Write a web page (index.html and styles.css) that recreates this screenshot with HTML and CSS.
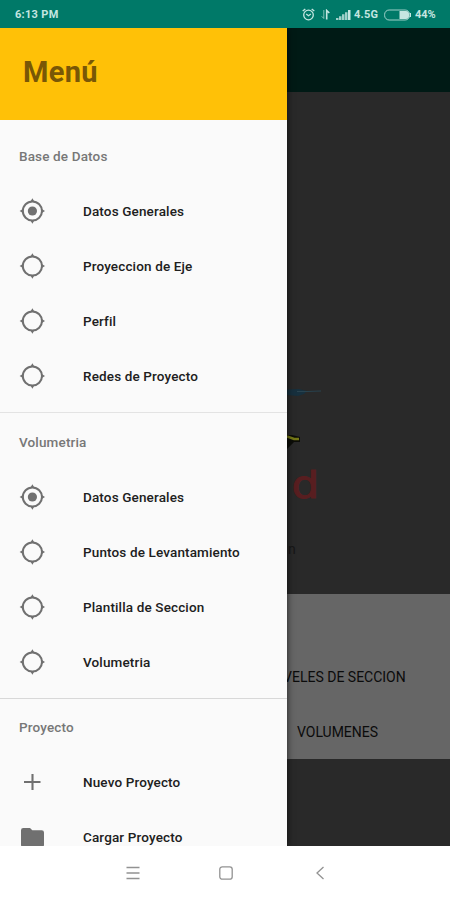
FILE: index.html
```html
<!DOCTYPE html>
<html lang="es">
<head>
<meta charset="utf-8">
<title>Menú</title>
<link rel="stylesheet" href="styles.css">
</head>
<body>
<svg width="0" height="0" class="defs">
  <symbol id="target" viewBox="0 0 26 26"><circle cx="13.400" cy="13" r="9.6" fill="none" stroke="currentColor" stroke-width="2"/><path d="M13.400 .2 15.600 4h-4.400zM13.400 25.800 11.200 22h4.400zM.6 13 4.400 10.800v4.400zM26 13 22.400 15.200v-4.400z" fill="currentColor"/></symbol>
  <symbol id="fixed" viewBox="0 0 26 26"><use href="#target"/><circle cx="13.400" cy="13" r="4.6" fill="currentColor"/></symbol>
  <symbol id="plus" viewBox="0 0 26 26"><path d="M13.500 5v16M5 13h16.500" stroke="currentColor" stroke-width="2.1"/></symbol>
  <symbol id="folder" viewBox="0 0 26 26"><path d="M4.300 4H11l2.3 2.2h9.400a2.3 2.3 0 0 1 2.3 2.3v12.2a2.3 2.3 0 0 1-2.3 2.3H4.300a2.3 2.3 0 0 1-2.3-2.3V6.300a2.300 2.300 0 0 1 2.300-2.300z" fill="currentColor"/></symbol>
</svg>
<div class="phone">
  <header class="status">
    <span class="time">6:13 PM</span>
    <svg class="alarm" width="13" height="13" viewBox="0 0 13 13" fill="none" stroke="currentColor" stroke-width="1.3"><circle cx="6.500" cy="7" r="4.800"/><path d="M.7 3 3.300.9M12.300 3 9.700.9M4.200 6l2.300 1.700L8.900 6"/></svg>
    <svg class="data" width="9" height="11" viewBox="0 0 9 11" fill="none" stroke="currentColor"><path d="M2.800 1v8.500L.7 7.300" stroke-width="1" opacity=".65"/><path d="M5.700 10.500V1.500L8.300 4" stroke-width="1.600"/></svg>
    <svg class="signal" width="15" height="11" viewBox="0 0 15 11" fill="currentColor"><path d="M0 9h2.500v2H0zM3 7.300h2.500V11H3zM6 5.200h2.500V11H6zM9 3.200h2.500V11H9z" opacity=".8"/><path d="M12 1h2.500v10H12z"/></svg>
    <span class="network">4.5G</span>
    <svg class="battery" width="28" height="12" viewBox="0 0 28 12"><rect x=".6" y="1" width="25" height="10" rx="4.500" fill="none" stroke="currentColor" opacity=".8"/><path d="M15.500 2H22a3 3 0 0 1 3 3v2a3 3 0 0 1-3 3h-6.500z" fill="currentColor"/><path d="M26.500 4v4" stroke="currentColor"/></svg>
    <span class="percent">44%</span>
  </header>
  <main class="screen">
    <div class="page">
      <div class="appbar"></div>
      <div class="hero">
        <svg width="163" height="502" viewBox="0 0 163 502">
          <path d="M0 297.500l12-.5 8 2-3 3-6 2-11-1z" fill="#17303e"/>
          <path d="M10 299.500h10l14-.5" stroke="#29434f" stroke-width="1"/>
          <path d="M0 343h5l8 2v5H7l-7 7z" fill="#0c0d08"/><path d="M0 344.500l7 2.500h5" fill="none" stroke="#757817" stroke-width="2.500"/>
          <text x="0" y="0" class="logo" transform="translate(4.500 406) scale(1.180 1)">d</text>
          <text x="1" y="462" class="caption">n</text>
        </svg>
      </div>
      <div class="actions"><span>NIVELES DE SECCION</span><span>VOLUMENES</span></div>
    </div>
    <nav class="drawer">
      <h1>Menú</h1>
      <section>
        <h2>Base de Datos</h2>
        <a><svg><use href="#fixed"/></svg><span>Datos Generales</span></a>
        <a><svg><use href="#target"/></svg><span>Proyeccion de Eje</span></a>
        <a><svg><use href="#target"/></svg><span>Perfil</span></a>
        <a><svg><use href="#target"/></svg><span>Redes de Proyecto</span></a>
      </section>
      <section>
        <h2>Volumetria</h2>
        <a><svg><use href="#fixed"/></svg><span>Datos Generales</span></a>
        <a><svg><use href="#target"/></svg><span>Puntos de Levantamiento</span></a>
        <a><svg><use href="#target"/></svg><span>Plantilla de Seccion</span></a>
        <a><svg><use href="#target"/></svg><span>Volumetria</span></a>
      </section>
      <section>
        <h2>Proyecto</h2>
        <a><svg><use href="#plus"/></svg><span>Nuevo Proyecto</span></a>
        <a><svg><use href="#folder"/></svg><span>Cargar Proyecto</span></a>
      </section>
    </nav>
  </main>
  <footer class="navbar">
    <svg width="14" height="14" viewBox="0 0 14 14"><path d="M.5 1.500h13M.5 7h13M.5 12.500h13"/></svg>
    <svg width="14" height="14" viewBox="0 0 14 14"><rect x=".8" y=".8" width="12.400" height="12.400" rx="2.500"/></svg>
    <svg width="14" height="14" viewBox="0 0 14 14"><path d="M10.500 1 4 7l6.500 6"/></svg>
  </footer>
</div>
</body>
</html>
```
FILE: styles.css
```css
* { box-sizing: border-box; }
body { margin: 0; font-family: Roboto, sans-serif; }
.defs { display: none; }
.phone { width: 450px; height: 900px; display: flex; flex-direction: column; overflow: hidden; background: #fff; }
.status { height: 28px; flex: none; display: flex; align-items: center; padding: 1px 0 0 15px; background: #007968; color: #c5e6e1; font-size: 11px; font-weight: 700; }
.time { margin-right: auto; letter-spacing: .3px; }
.data { margin-left: 6px; }
.signal { margin-left: 6px; }
.network { width: 26px; margin-left: 3px; letter-spacing: .2px; }
.battery { margin-left: 4px; }
.percent { width: 35px; margin-left: 3px; }
.screen { height: 818px; flex: none; display: grid; grid-template-columns: 287px 163px; overflow: hidden; }
.page { grid-area: 1 / 1 / 2 / 3; height: 818px; display: flex; flex-direction: column; background: #292929; }
.appbar { height: 64px; background: #001a15; }
.hero { height: 502px; padding-left: 287px; }
.hero svg { display: block; }
.logo { font: 37px "DejaVu Sans", sans-serif; fill: #581e20; stroke: #581e20; stroke-width: 1px; }
.caption { font: 14px Roboto, sans-serif; fill: #171717; }
.actions { height: 165px; padding: 55px 0 0 225px; background: #666; color: #0b0b0b; font-size: 14px; text-align: center; }
.actions span { display: block; height: 55px; line-height: 56px; white-space: nowrap; }
.drawer { grid-area: 1 / 1 / 2 / 2; z-index: 1; height: 818px; overflow: hidden; background: #fafafa; box-shadow: 0 0 7px rgba(0, 0, 0, .7); }
h1 { height: 92px; margin: 0; padding: 0 0 4px 23px; display: flex; align-items: center; background: #ffc107; color: #795706; font-size: 29px; font-weight: 700; letter-spacing: .3px; }
section { padding: 9px 0 8px; }
section + section { padding-top: 2px; border-top: 1px solid #e3e3e3; }
section:last-child { padding-top: 1px; border-color: #d8d8d8; }
h2 { height: 55px; margin: 0; padding-left: 19px; line-height: 55px; color: #777; font-size: 13.5px; font-weight: 500; letter-spacing: .15px; }
a { height: 55px; display: flex; align-items: center; padding-left: 19px; color: #202020; font-size: 13.5px; font-weight: 500; letter-spacing: .14px; }
a span { margin-top: -2px; }
a svg { width: 26px; height: 26px; margin: -2px 38px 0 0; color: #707070; }
.navbar { flex: 1; display: flex; padding: 0 83px 0 86px; justify-content: space-around; align-items: center; }
.navbar svg { fill: none; stroke: #929292; stroke-width: 1.3; }
```
